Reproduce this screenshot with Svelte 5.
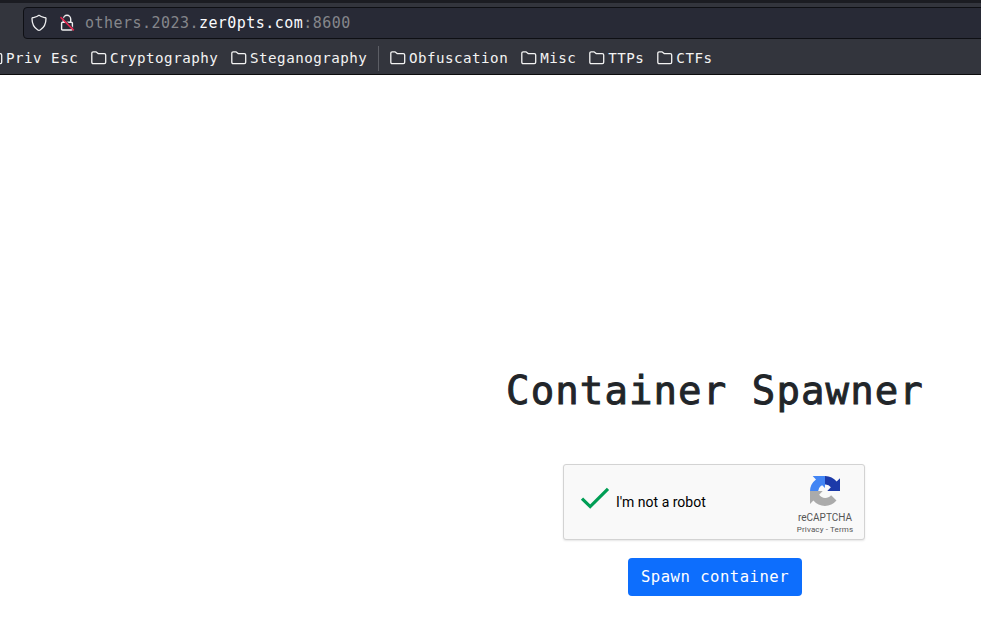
<script>
  const left = ['Priv Esc', 'Cryptography', 'Steganography'];
  const right = ['Obfuscation', 'Misc', 'TTPs', 'CTFs'];
</script>

{#snippet folder(name)}
  <span class="bookmark">
    <svg width="16" height="16" viewBox="0 0 16 16" fill="none" stroke="#f3f3f3" stroke-width="1.3">
      <path d="M.8 3.2Q.8 1.8 2.2 1.8H5L7.2 3.6H13.3Q14.7 3.6 14.7 5V12.2Q14.7 13.6 13.3 13.6H2.2Q.8 13.6.8 12.2Z" />
    </svg><span>{name}</span>
  </span>
{/snippet}

<div class="window">
  <header>
    <div class="toolbar">
      <div class="address">
        <svg class="shield" width="16" height="18" viewBox="0 0 16 18" fill="none" stroke="#f0f0f1" stroke-width="1.3" stroke-linejoin="round">
          <path d="M8 1.3C6.2 2.8 3.8 3.2 1.7 3.7Q1 3.9 1 4.6C1 10.2 3 13.8 6.8 16Q8 16.7 9.2 16C13 13.8 15 10.2 15 4.6Q15 3.9 14.3 3.7C12.2 3.2 9.8 2.8 8 1.3Z" />
        </svg>
        <svg class="lock" width="16" height="18" viewBox="0 0 16 18" fill="none">
          <path d="M4.3 8V5A3.7 3.7 0 0 1 11.7 5V8M3.5 8.2H12.3Q13.4 8.2 13.4 9.3V14.9Q13.4 16 12.3 16H3.7Q2.6 16 2.6 14.9V9.3Q2.6 8.2 3.7 8.2" stroke="#eeeef0" stroke-width="1.4" />
          <path d="M2.8 2.6 15 14.8" stroke="#282a36" stroke-width="1" />
          <path d="M1.5 3.1 14.8 16.4" stroke="#e22850" stroke-width="1.5" />
        </svg>
        <span class="url">others.2023.<b>zer0pts.com</b>:8600</span>
      </div>
    </div>
    <nav>
      {#each left as name}{@render folder(name)}{/each}
      <i class="divider"></i>
      {#each right as name}{@render folder(name)}{/each}
    </nav>
  </header>

  <main>
    <h1>Container Spawner</h1>
    <section class="captcha">
      <svg class="check" width="30" height="24" viewBox="0 0 30 24" fill="none" stroke="#009e55" stroke-width="3.2">
        <path d="M2 11.6 10.2 19.6 28 1.8" />
      </svg>
      <span class="label">I'm not a robot</span>
      <div class="brand">
        <svg width="30" height="30" viewBox="0 0 64 64">
          <path fill="#1c3aa9" d="M64 32V4.6l-7.2 7.2A32 32 0 0 0 31.5 0V18a14 14 0 0 1 13 6L36.8 32Z" />
          <path fill="#4285f4" d="M32 0H5.7l7.1 7.2A32 32 0 0 0 0 32H17.5A15 15 0 0 1 23 21.5L26 19.5 32 25.5Z" />
          <path fill="#ababab" d="M0 32V59.5l7.2-7.2A32 32 0 0 0 56.5 52.3L45 40.8A15.8 15.8 0 0 1 19.5 40L27 32Z" />
        </svg>
        <span class="name">reCAPTCHA</span>
        <span class="links">Privacy <span>-</span> Terms</span>
      </div>
    </section>
    <button>Spawn container</button>
  </main>
</div>

<style>
  :global(body) { margin: 0; background: #fff; }
  .window { width: 981px; height: 633px; overflow: hidden; font-family: "DejaVu Sans Mono", monospace; }
  header {
    box-sizing: border-box; height: 75px; background: #33353d;
    border-top: 3px solid #1b1c22; border-bottom: 1px solid #0c0c0d;
  }
  .toolbar { height: 36px; padding: 4px 0 0 23px; box-sizing: border-box; }
  .address {
    display: flex; align-items: center; height: 32px; box-sizing: border-box;
    width: 970px; background: #282a36; border: 1px solid #0e0f14; border-radius: 4px;
  }
  .shield { margin-left: 7px; flex: none; }
  .lock { margin-left: 12px; flex: none; }
  .url { margin-left: 10px; color: #85868b; font-size: 15px; letter-spacing: .46px; line-height: 20px; white-space: pre; }
  .url b { color: #fbfbfe; font-weight: 400; }
  nav { display: flex; align-items: center; height: 36px; margin-left: -13px; padding-top: 2px; box-sizing: border-box; }
  .bookmark {
    display: flex; align-items: center; gap: 3px; margin-right: 12.8px; flex: none;
    font-size: 14.2px; letter-spacing: .48px; line-height: 20px; color: #f3f3f3; white-space: pre;
  }
  .bookmark svg { flex: none; }
  .divider { width: 1px; height: 25px; background: #5c5e65; margin: 0 11.2px 0 -2.4px; flex: none; }
  .divider ~ .bookmark { margin-right: 13px; }
  main { display: flex; flex-direction: column; align-items: center; width: 533px; margin-left: 448px; padding-top: 291px; }
  h1 {
    margin: 0 0 0 1px; height: 50px; line-height: 50px; font-size: 39px; font-weight: 400;
    letter-spacing: 1.1px; color: #212529; -webkit-text-stroke: .9px #212529; white-space: pre;
  }
  .captcha {
    display: flex; align-items: center; box-sizing: border-box; width: 302px; height: 76px; margin: 48px 2px 0 0;
    background: #f9f9f9; border: 1px solid #d3d3d3; border-radius: 3px; box-shadow: 0 1px 2px rgba(0, 0, 0, .1);
    font-family: Roboto, sans-serif;
  }
  .check { margin: -7px 0 0 16px; flex: none; }
  .label { width: 150px; margin-left: 6.5px; font-size: 14px; line-height: 17px; color: #000; }
  .brand { display: flex; flex-direction: column; align-items: center; width: 60px; margin-left: 29px; height: 56px; margin-top: 3px; color: #555; }
  .brand svg { flex: none; }
  .name { font-size: 10px; line-height: 12px; margin-top: 6px; }
  .links { font-size: 8px; line-height: 10px; margin-top: 1px; letter-spacing: .13px; white-space: pre; }
  button {
    width: 174px; height: 38px; margin: 18px 0 0; padding: 0 0 1px 1px; border: 0; border-radius: 4px;
    background: #0d6efd; color: #fff; font: 15.6px/24px "DejaVu Sans Mono", monospace; letter-spacing: .49px; white-space: pre;
  }
</style>
